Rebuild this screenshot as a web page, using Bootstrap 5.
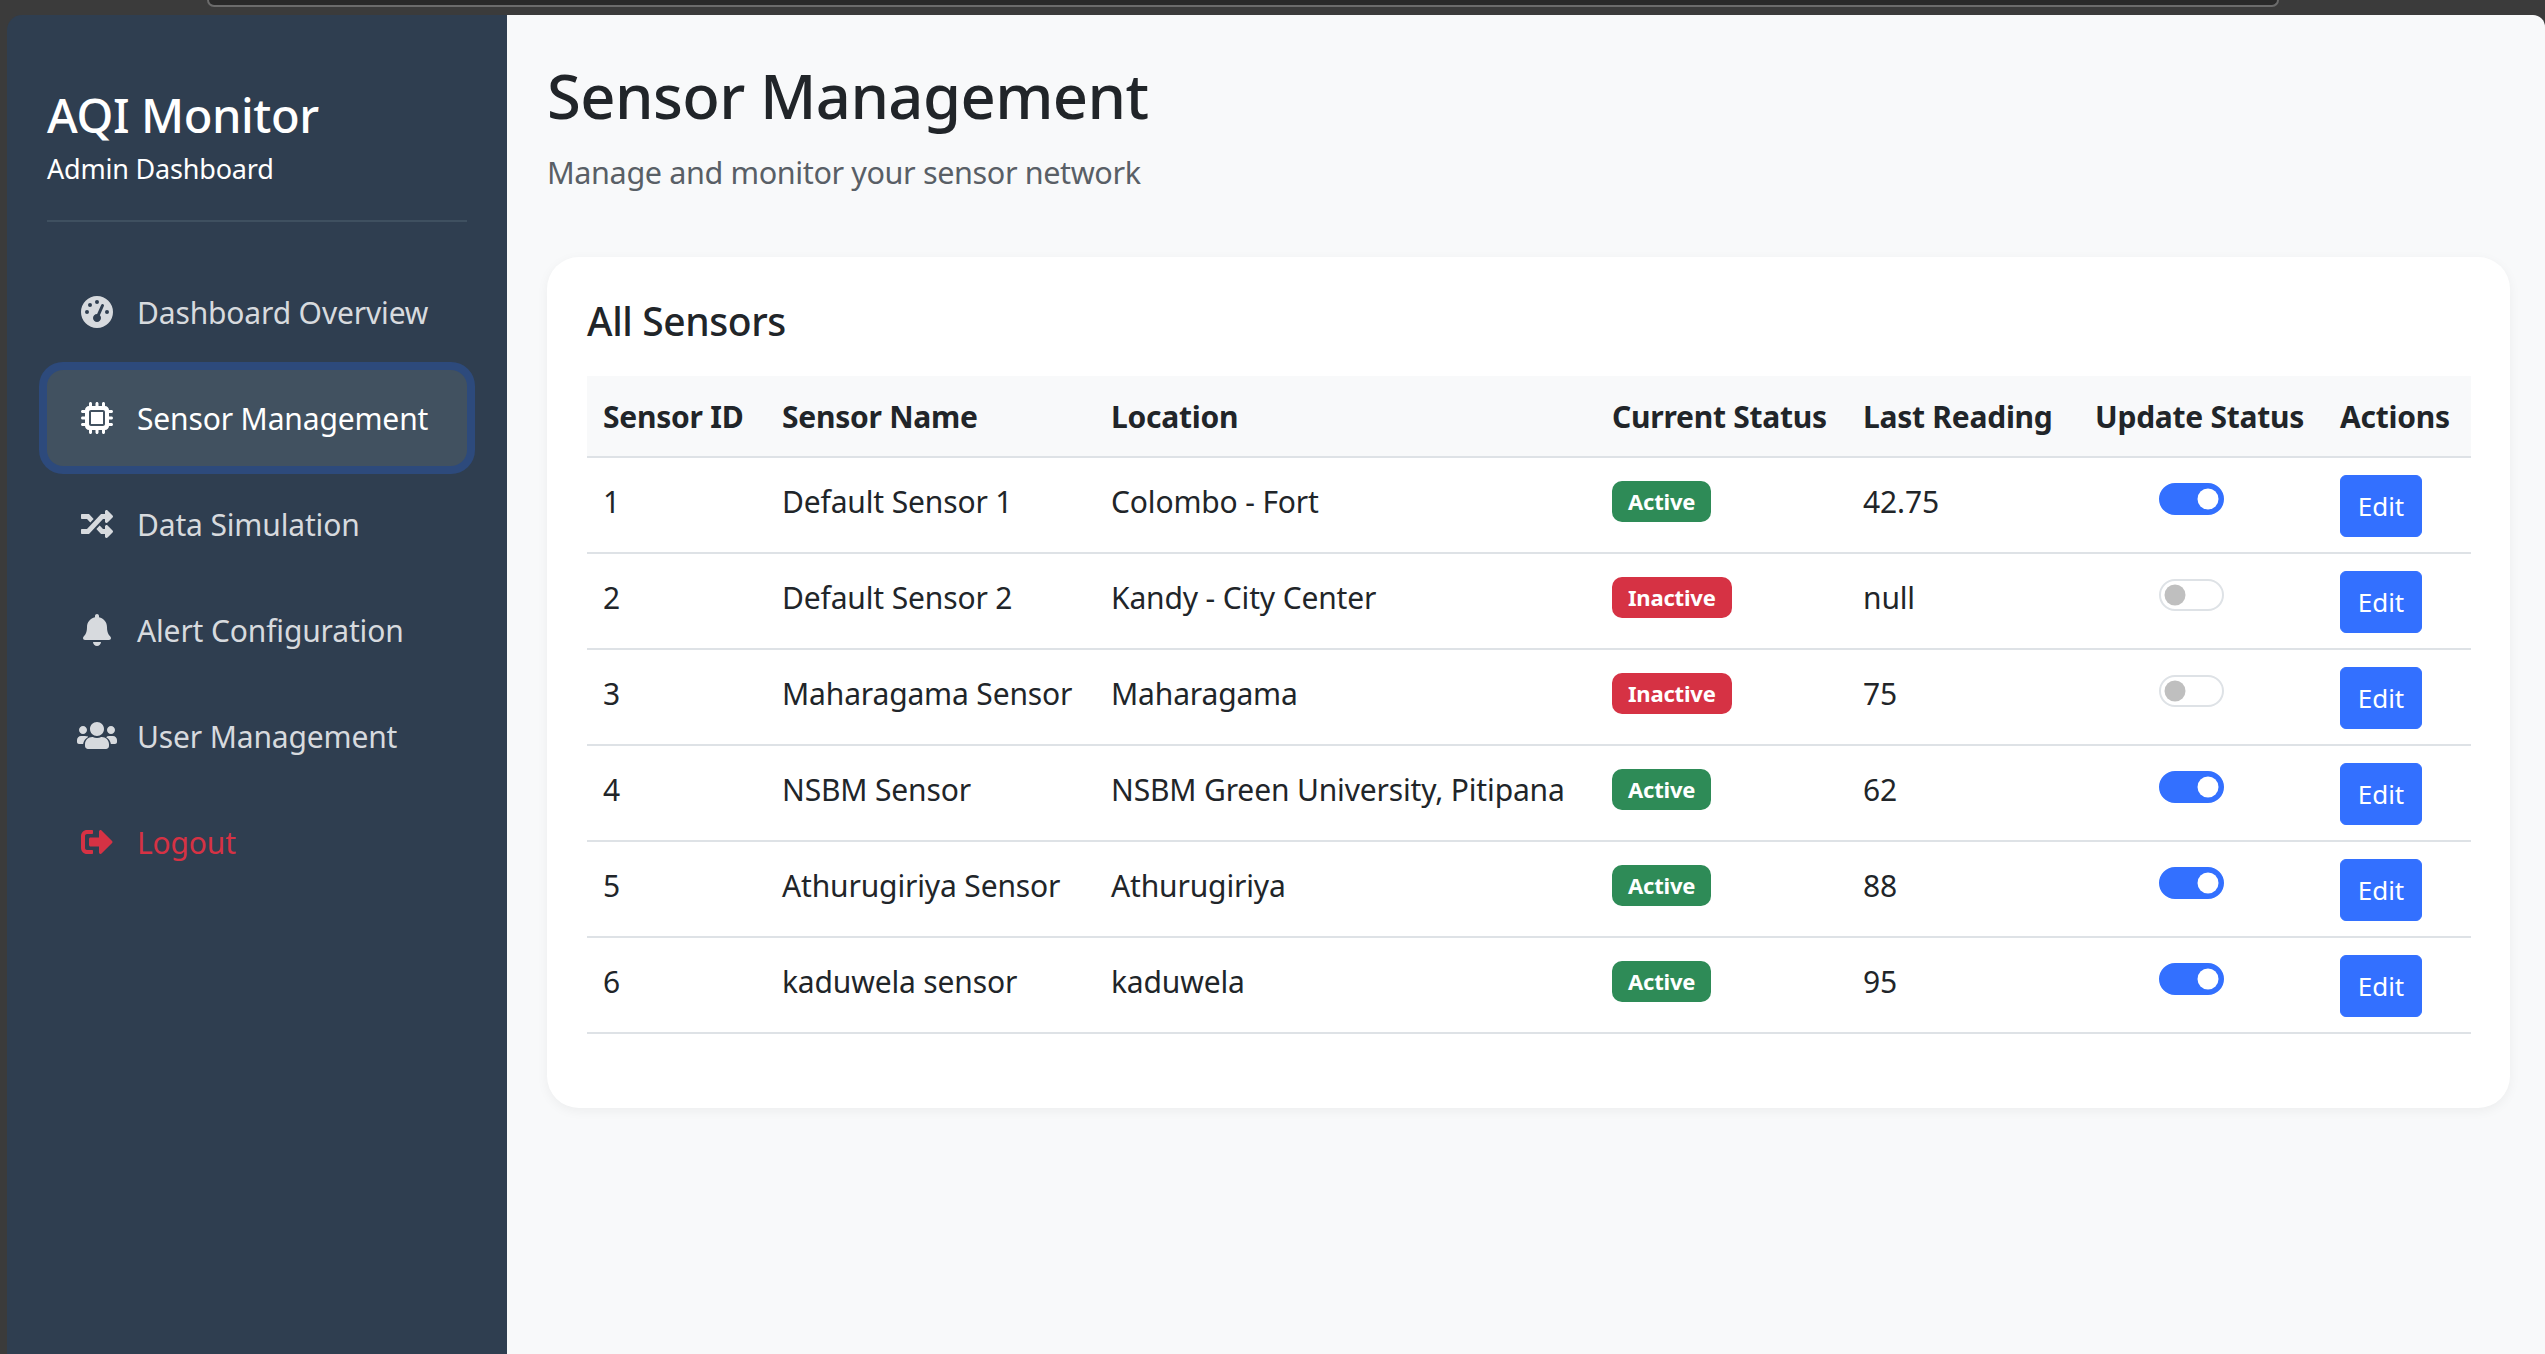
<!DOCTYPE html>
<html lang="en">
<head>
    <meta charset="UTF-8">
    <meta name="viewport" content="width=device-width, initial-scale=1.0">
    <title>Sensor Management</title>
    <link href="https://cdn.jsdelivr.net/npm/bootstrap@5.3.0/dist/css/bootstrap.min.css" rel="stylesheet">
    <style>
        html, body { height: 100%; }
        body {
            background: #3b3b3b;
            font-family: "Noto Sans", "Open Sans", sans-serif;
            font-size: 30px;
            letter-spacing: -0.15px;
            color: #212529;
            overflow: hidden;
        }
        /* browser strip over the page */
        .chrome-strip { height: 15px; }
        .chrome-address {
            width: 2072px;
            height: 7px;
            margin-left: 207px;
            background: #292929;
            border: 2px solid #6b6b6b;
            border-top: 0;
            border-radius: 0 0 18px 18px;
        }
        .app-shell { height: calc(100vh - 15px); padding-left: 7px; }

        /* sidebar */
        .side-panel {
            width: 500px;
            flex-shrink: 0;
            padding: 0 40px;
            background: #2f3e50;
            border-top-left-radius: 15px;
            color: #fff;
        }
        .side-head {
            padding-top: 68px;
            height: 207px;
            border-bottom: 2px solid #3f5060;
            margin-bottom: 42px;
        }
        .side-title { font-size: 47px; font-weight: 500; line-height: 1.4; margin: 0; letter-spacing: -0.4px; }
        .side-sub { font-size: 27px; line-height: 1.5; margin: 0; letter-spacing: -0.2px; }
        .side-link {
            display: flex;
            align-items: center;
            height: 96px;
            margin-bottom: 10px;
            padding: 0 0 0 30px;
            gap: 20px;
            color: #d7dade;
            border-radius: 16px;
        }
        .side-link.active {
            color: #fff;
            background: #415160;
            box-shadow: 0 0 0 8px #2d4a7c;
        }
        .side-link.logout { color: #d63244; }
        .side-icon { width: 40px; height: 32px; fill: currentColor; flex-shrink: 0; }

        /* main area */
        .main-area {
            flex-grow: 1;
            min-width: 0;
            background: #f8f9fa;
            border-top-right-radius: 12px;
            padding: 44px 35px 0 40px;
        }
        .page-title { font-size: 61.5px; font-weight: 500; line-height: 1.2; margin: 0 0 17px; letter-spacing: -0.6px; }
        .page-sub { font-size: 30.6px; line-height: 1.5; margin: 0 0 61px; color: #595f66; letter-spacing: -0.4px; }
        .sensor-panel {
            height: 851px;
            padding: 41px 40px 40px;
            background: #fff;
            border-radius: 32px;
            box-shadow: 0 3px 12px rgba(0, 0, 0, .05);
        }
        .sensor-heading { font-size: 39px; font-weight: 500; line-height: 1.2; margin: 0 0 32px; letter-spacing: -0.4px; }

        /* table */
        .sensor-table { table-layout: fixed; width: 1884px; margin: 0; font-size: 30px; }
        .sensor-table > :not(caption) > * > * { padding: 21px 16px 0; border-bottom: 2px solid #dee2e6; height: 96px; vertical-align: top; color: #212529; white-space: nowrap; }
        .sensor-table > thead > tr > th {
            height: 81px;
            padding-top: 0;
            vertical-align: middle;
            font-size: 30px;
            font-weight: 700;
            letter-spacing: -0.25px;
            background: #f8f9fa;
        }
        .col-id { width: 179px; }
        .col-name { width: 329px; }
        .col-location { width: 501px; }
        .col-status { width: 251px; }
        .col-reading { width: 232px; }
        .col-toggle { width: 245px; }
        .col-actions { width: 147px; }
        .sensor-table td.status-cell { padding-top: 23px; }
        .sensor-table td.toggle-cell { padding-top: 25px; }
        .sensor-table td.action-cell { padding-top: 17px; }
        .state-pill {
            display: block;
            width: fit-content;
            height: 41px;
            padding: 0 16px;
            font-size: 22px;
            font-weight: 700;
            line-height: 41px;
            letter-spacing: -0.2px;
            border-radius: 10px;
            color: #fff;
        }
        .state-on { background: #2e8b57; }
        .state-off { background: #d63244; }
        .toggle-wrap { padding: 0; margin: 0 0 0 64px; min-height: 0; display: flex; }
        .toggle-wrap .form-check-input {
            width: 65px;
            height: 32px;
            margin: 0;
            float: none;
            border: 2px solid #dee2e6;
        }
        .toggle-wrap .form-check-input:checked { background-color: #3370ff; border-color: #3370ff; }
        .edit-btn {
            display: block;
            width: 82px;
            height: 62px;
            padding: 0;
            font-size: 26px;
            border-radius: 6px;
            background: #3370ff;
            border-color: #3370ff;
        }
    </style>
</head>
<body>
    <div class="chrome-strip">
        <div class="chrome-address"></div>
    </div>
    <div class="app-shell d-flex">
        <aside class="side-panel">
            <div class="side-head">
                <h3 class="side-title">AQI Monitor</h3>
                <p class="side-sub">Admin Dashboard</p>
            </div>
            <nav class="nav flex-column">
                <a class="side-link text-decoration-none" href="#">
                    <svg class="side-icon" viewBox="0 0 640 512"><path transform="translate(64)" d="M0 256a256 256 0 1 1 512 0A256 256 0 1 1 0 256zM288 96a32 32 0 1 0 -64 0 32 32 0 1 0 64 0zM256 416c35.3 0 64-28.7 64-64c0-17.4-6.9-33.1-18.1-44.6L366 161.7c5.3-12.1-.2-26.3-12.3-31.6s-26.3 .2-31.6 12.3L257.9 288c-.6 0-1.3 0-1.9 0c-35.3 0-64 28.7-64 64s28.7 64 64 64zM176 144a32 32 0 1 0 -64 0 32 32 0 1 0 64 0zM96 288a32 32 0 1 0 0-64 32 32 0 1 0 0 64zm352-32a32 32 0 1 0 -64 0 32 32 0 1 0 64 0z"/></svg>
                    Dashboard Overview
                </a>
                <a class="side-link active text-decoration-none" href="#">
                    <svg class="side-icon" viewBox="0 0 640 512"><path transform="translate(64)" d="M176 24c0-13.3-10.7-24-24-24s-24 10.7-24 24V64c-35.3 0-64 28.7-64 64H24c-13.3 0-24 10.7-24 24s10.7 24 24 24H64v56H24c-13.3 0-24 10.7-24 24s10.7 24 24 24H64v56H24c-13.3 0-24 10.7-24 24s10.7 24 24 24H64c0 35.3 28.7 64 64 64v40c0 13.3 10.7 24 24 24s24-10.7 24-24V448h56v40c0 13.3 10.7 24 24 24s24-10.7 24-24V448h56v40c0 13.3 10.7 24 24 24s24-10.7 24-24V448c35.3 0 64-28.7 64-64h40c13.3 0 24-10.7 24-24s-10.7-24-24-24H448V280h40c13.3 0 24-10.7 24-24s-10.7-24-24-24H448V176h40c13.3 0 24-10.7 24-24s-10.7-24-24-24H448c0-35.3-28.7-64-64-64V24c0-13.3-10.7-24-24-24s-24 10.7-24 24V64H280V24c0-13.3-10.7-24-24-24s-24 10.7-24 24V64H176V24zM160 128H352c17.7 0 32 14.3 32 32V352c0 17.7-14.3 32-32 32H160c-17.7 0-32-14.3-32-32V160c0-17.7 14.3-32 32-32zm192 32H160V352H352V160z"/></svg>
                    Sensor Management
                </a>
                <a class="side-link text-decoration-none" href="#">
                    <svg class="side-icon" viewBox="0 0 640 512"><path transform="translate(64)" d="M504.971 359.029c9.373 9.373 9.373 24.569 0 33.941l-80 79.984c-15.01 15.01-40.971 4.49-40.971-16.971V416h-58.785a12.004 12.004 0 0 1-8.773-3.812l-70.556-75.596 53.333-57.143L352 336h32v-39.981c0-21.438 25.943-31.998 40.971-16.971l80 79.981zM12 176h84l52.781 56.551 53.333-57.143-70.556-75.596A11.999 11.999 0 0 0 122.785 96H12c-6.627 0-12 5.373-12 12v56c0 6.627 5.373 12 12 12zm372 0v39.984c0 21.46 25.961 31.98 40.971 16.971l80-79.984c9.373-9.373 9.373-24.569 0-33.941l-80-79.981C409.943 24.021 384 34.582 384 56.019V96h-58.785a12.004 12.004 0 0 0-8.773 3.812L96 336H12c-6.627 0-12 5.373-12 12v56c0 6.627 5.373 12 12 12h110.785c3.326 0 6.503-1.381 8.773-3.812L352 176h32z"/></svg>
                    Data Simulation
                </a>
                <a class="side-link text-decoration-none" href="#">
                    <svg class="side-icon" viewBox="0 0 640 512"><path transform="translate(96)" d="M224 512c35.32 0 63.97-28.65 63.97-64H160.03c0 35.35 28.65 64 63.97 64zm215.39-149.71c-19.32-20.76-55.47-51.99-55.47-154.29 0-77.7-54.48-139.9-127.94-155.16V32c0-17.67-14.32-32-31.98-32s-31.98 14.33-31.98 32v20.84C118.56 68.1 64.08 130.3 64.08 208c0 102.3-36.15 133.53-55.47 154.29-6 6.45-8.66 14.16-8.61 21.71.11 16.4 12.98 32 32.1 32h383.8c19.12 0 32-15.6 32.1-32 .05-7.55-2.61-15.27-8.61-21.71z"/></svg>
                    Alert Configuration
                </a>
                <a class="side-link text-decoration-none" href="#">
                    <svg class="side-icon" viewBox="0 0 640 512"><path d="M96 224c35.3 0 64-28.7 64-64s-28.7-64-64-64-64 28.7-64 64 28.7 64 64 64zm448 0c35.3 0 64-28.7 64-64s-28.7-64-64-64-64 28.7-64 64 28.7 64 64 64zm32 32h-64c-17.6 0-33.5 7.1-45.1 18.6 40.3 22.1 68.9 62 75.1 109.4h66c17.7 0 32-14.3 32-32v-32c0-35.3-28.7-64-64-64zm-256 0c61.9 0 112-50.1 112-112S381.9 32 320 32 208 82.1 208 144s50.1 112 112 112zm76.8 16h-8.3c-20.8 10-43.9 16-68.5 16s-47.6-6-68.5-16h-8.3C179.6 272 128 323.6 128 387.2V416c0 26.5 21.5 48 48 48h288c26.5 0 48-21.5 48-48v-28.8c0-63.6-51.6-115.2-115.2-115.2zm-223.7-13.4C161.5 263.1 145.6 256 128 256H64c-35.3 0-64 28.7-64 64v32c0 17.7 14.3 32 32 32h65.9c6.3-47.4 34.9-87.3 75.2-109.4z"/></svg>
                    User Management
                </a>
                <a class="side-link logout text-decoration-none" href="#">
                    <svg class="side-icon" viewBox="0 0 640 512"><path transform="translate(64)" d="M497 273L329 441c-15 15-41 4.5-41-17v-96H152c-13.3 0-24-10.7-24-24v-96c0-13.3 10.7-24 24-24h136V88c0-21.4 25.9-32 41-17l168 168c9.3 9.4 9.3 24.6 0 34zM192 436v-40c0-6.6-5.4-12-12-12H96c-17.7 0-32-14.3-32-32V160c0-17.7 14.3-32 32-32h84c6.6 0 12-5.4 12-12V76c0-6.6-5.4-12-12-12H96c-53 0-96 43-96 96v192c0 53 43 96 96 96h84c6.6 0 12-5.4 12-12z"/></svg>
                    Logout
                </a>
            </nav>
        </aside>

        <main class="main-area">
            <h1 class="page-title">Sensor Management</h1>
            <p class="page-sub">Manage and monitor your sensor network</p>

            <section class="sensor-panel">
                <h4 class="sensor-heading">All Sensors</h4>
                <table class="table sensor-table">
                    <colgroup>
                        <col class="col-id"><col class="col-name"><col class="col-location"><col class="col-status"><col class="col-reading"><col class="col-toggle"><col class="col-actions">
                    </colgroup>
                    <thead>
                        <tr>
                            <th>Sensor ID</th>
                            <th>Sensor Name</th>
                            <th>Location</th>
                            <th>Current Status</th>
                            <th>Last Reading</th>
                            <th>Update Status</th>
                            <th>Actions</th>
                        </tr>
                    </thead>
                    <tbody>
                        <tr>
                            <td>1</td>
                            <td>Default Sensor 1</td>
                            <td>Colombo - Fort</td>
                            <td class="status-cell"><span class="state-pill state-on">Active</span></td>
                            <td>42.75</td>
                            <td class="toggle-cell"><div class="form-check form-switch toggle-wrap"><input class="form-check-input" type="checkbox" checked></div></td>
                            <td class="action-cell"><button class="btn btn-primary edit-btn">Edit</button></td>
                        </tr>
                        <tr>
                            <td>2</td>
                            <td>Default Sensor 2</td>
                            <td>Kandy - City Center</td>
                            <td class="status-cell"><span class="state-pill state-off">Inactive</span></td>
                            <td>null</td>
                            <td class="toggle-cell"><div class="form-check form-switch toggle-wrap"><input class="form-check-input" type="checkbox"></div></td>
                            <td class="action-cell"><button class="btn btn-primary edit-btn">Edit</button></td>
                        </tr>
                        <tr>
                            <td>3</td>
                            <td>Maharagama Sensor</td>
                            <td>Maharagama</td>
                            <td class="status-cell"><span class="state-pill state-off">Inactive</span></td>
                            <td>75</td>
                            <td class="toggle-cell"><div class="form-check form-switch toggle-wrap"><input class="form-check-input" type="checkbox"></div></td>
                            <td class="action-cell"><button class="btn btn-primary edit-btn">Edit</button></td>
                        </tr>
                        <tr>
                            <td>4</td>
                            <td>NSBM Sensor</td>
                            <td>NSBM Green University, Pitipana</td>
                            <td class="status-cell"><span class="state-pill state-on">Active</span></td>
                            <td>62</td>
                            <td class="toggle-cell"><div class="form-check form-switch toggle-wrap"><input class="form-check-input" type="checkbox" checked></div></td>
                            <td class="action-cell"><button class="btn btn-primary edit-btn">Edit</button></td>
                        </tr>
                        <tr>
                            <td>5</td>
                            <td>Athurugiriya Sensor</td>
                            <td>Athurugiriya</td>
                            <td class="status-cell"><span class="state-pill state-on">Active</span></td>
                            <td>88</td>
                            <td class="toggle-cell"><div class="form-check form-switch toggle-wrap"><input class="form-check-input" type="checkbox" checked></div></td>
                            <td class="action-cell"><button class="btn btn-primary edit-btn">Edit</button></td>
                        </tr>
                        <tr>
                            <td>6</td>
                            <td>kaduwela sensor</td>
                            <td>kaduwela</td>
                            <td class="status-cell"><span class="state-pill state-on">Active</span></td>
                            <td>95</td>
                            <td class="toggle-cell"><div class="form-check form-switch toggle-wrap"><input class="form-check-input" type="checkbox" checked></div></td>
                            <td class="action-cell"><button class="btn btn-primary edit-btn">Edit</button></td>
                        </tr>
                    </tbody>
                </table>
            </section>
        </main>
    </div>

    <script src="https://cdn.jsdelivr.net/npm/bootstrap@5.3.0/dist/js/bootstrap.bundle.min.js"></script>
</body>
</html>
